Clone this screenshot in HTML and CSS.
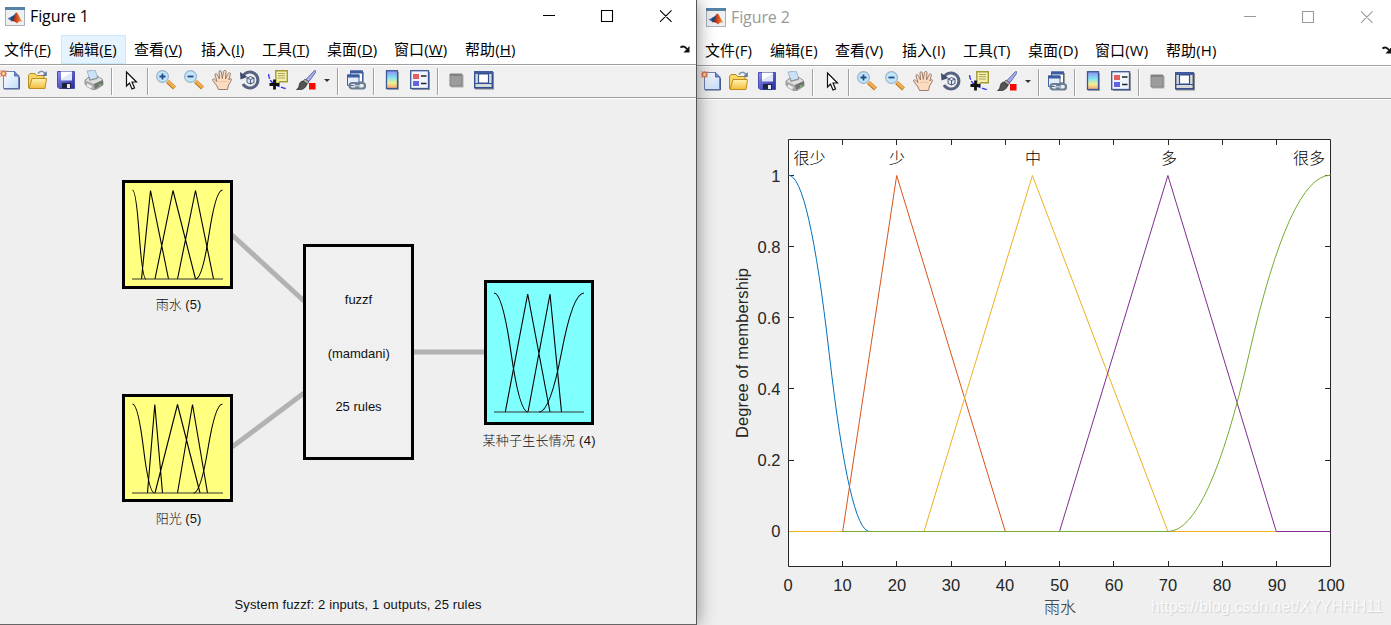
FILE: index.html
```html
<!DOCTYPE html>
<html lang="zh-CN">
<head>
    <meta charset="UTF-8">
    <meta name="viewport" content="width=device-width, initial-scale=1.0">
    <title>Figure 1</title>
    <link rel="stylesheet" href="styles.css">
</head>
<body>
    <!-- shared icons -->
    <svg class="sprite" width="0" height="0">
        <defs>
            <linearGradient id="gPage" x1="0" y1="0" x2="1" y2="1"><stop offset="0" stop-color="#fff"/><stop offset="1" stop-color="#c3dcfa"/></linearGradient>
            <linearGradient id="gFolder" x1="0" y1="0" x2="0" y2="1"><stop offset="0" stop-color="#fff5b0"/><stop offset="1" stop-color="#f0bd3c"/></linearGradient>
            <linearGradient id="gDisk" x1="0" y1="0" x2="1" y2="1"><stop offset="0" stop-color="#8f93ec"/><stop offset="1" stop-color="#23279b"/></linearGradient>
            <linearGradient id="gBar" x1="0" y1="0" x2="0" y2="1"><stop offset="0" stop-color="#8c8cf0"/><stop offset=".4" stop-color="#85e6f0"/><stop offset=".7" stop-color="#f3ee90"/><stop offset="1" stop-color="#f5a070"/></linearGradient>
            <linearGradient id="gLogo" x1="0" y1="0" x2="1" y2="0"><stop offset="0" stop-color="#5a1210"/><stop offset=".4" stop-color="#d0401a"/><stop offset="1" stop-color="#f2a13a"/></linearGradient>
        </defs>
        <symbol id="logo" viewBox="0 0 20 19">
            <rect x=".5" y=".5" width="19" height="18" fill="#eef0f2" stroke="#a9b2ba"/>
            <path d="M0 0h20v3H0z" fill="#5583a8"/>
            <path d="M2.500 11.500l4-2 2 2-2 2.500z" fill="#3f78b5"/>
            <path d="M6 10l3-2 2-2.500-1 6-3.500 3-1-2z" fill="#224a80"/>
            <path d="M6.500 14c3-1 3-7.500 5-8.500 2 1 3 5.500 6 9.500-2-1.500-3.500-1-5.500 1.500-1-1.500-3-2.500-5.500-2.500z" fill="url(#gLogo)"/>
        </symbol>
        <symbol id="new" viewBox="0 0 20 20">
            <path d="M3.500 1.500h11l4 4v13h-15z" fill="url(#gPage)" stroke="#7183b4"/>
            <path d="M14.500 1v5h5" fill="#6f86c2" stroke="#566da9"/>
            <path d="M4 19h15.500V7" fill="none" stroke="#465a91"/>
            <path d="M0 0l2 1 1.500-1L5 1l2-1-1 2 1 2-1 1 1 2-2-1-1.500 1L2 6 0 7l1-2-1-1.500L1 2z" fill="#d97a5c"/>
            <circle cx="3.500" cy="3.500" r="1.500" fill="#ffd98c"/>
        </symbol>
        <symbol id="open" viewBox="0 0 20 20">
            <path d="M.5 17.500v-12l1.500-2h5l1.500 2H16v3H5l-3 9z" fill="#f6d56a" stroke="#b58a1e"/>
            <path d="M1 18.500L4 8.500h14.500l-1.500 10z" fill="url(#gFolder)" stroke="#c08d1c"/>
            <path d="M10 3.500c2-3 5-3 7 0" fill="none" stroke="#7e93ad" stroke-width="1.600"/>
            <path d="M18.800 1v5h-5z" fill="#647d9d"/>
        </symbol>
        <symbol id="save" viewBox="0 0 20 20">
            <path d="M1.500 1.500h17v17H3l-1.500-1.500z" fill="url(#gDisk)" stroke="#4a4fb0"/>
            <path d="M5 1.500h11v9H5z" fill="#dfe8fa"/>
            <path d="M5 2h11l-11 7z" fill="#fff"/>
            <path d="M6 13h9v5.500H6z" fill="#20233f"/>
            <path d="M11 14h3v4h-3z" fill="#e9ebf3"/>
        </symbol>
        <symbol id="print" viewBox="0 0 20 20">
            <path d="M3 1l8-1 3 8-8 2z" fill="#cbe1f7" stroke="#94a9c2" stroke-width=".8"/>
            <path d="M1 10l4-3 1 3 8-2-1-2 5 3 1 3v3l-8 5H9l-8-6z" fill="#aaa" stroke="#858585" stroke-width=".8"/>
            <path d="M1.500 10.500L10 14l8.500-4-4-3-1 2-8 2-1-3z" fill="#dedede"/>
            <path d="M10 14l9-4v4l-8 5z" fill="#747474"/>
            <path d="M3 13l6 3-2 3-5-3z" fill="#eee" stroke="#999" stroke-width=".6"/>
            <path d="M15 15h2" stroke="#62d352" stroke-width="1.300"/>
        </symbol>
        <symbol id="pointer" viewBox="0 0 20 20">
            <path d="M6.500 2v14l3-3 2.500 6 2.500-1-2.500-6h4.500z" fill="#fff" stroke="#111" stroke-width="1.200"/>
        </symbol>
        <symbol id="lens" viewBox="0 0 20 20">
            <path d="M11.500 11.500l7 6.500" stroke="#b9772a" stroke-width="4.200"/>
            <path d="M11.500 11l7 6.500" stroke="#f3ae49" stroke-width="2.600"/>
            <circle cx="6.500" cy="6.500" r="5.900" fill="#c0e6f8" stroke="#9ab3cb" stroke-width="1.200"/>
        </symbol>
        <symbol id="zoomin" viewBox="0 0 20 20">
            <use href="#lens"/>
            <path d="M3.500 6.500h6M6.500 3.500v6" stroke="#264a8e" stroke-width="1.800"/>
        </symbol>
        <symbol id="zoomout" viewBox="0 0 20 20">
            <use href="#lens"/>
            <path d="M3.500 6.500h6" stroke="#264a8e" stroke-width="1.800"/>
        </symbol>
        <symbol id="pan" viewBox="0 0 20 20">
            <path d="M6.500 19.500L5 16 .8 10.500c-.8-1.500.8-2.300 2-1L5 11.500 3 5c-.2-1.700 1.600-2 2.200-.5L7.500 9 7 2c0-1.800 2-1.800 2.300 0l1 6.500 1.200-7C12 0 14 0 14 1.700l-.5 7.300 2.700-5.500c.8-1.500 2.600-.6 2.100 1L16.800 10l1-1c1.300-1 2.200.2 1.500 1.300L16.500 15l-1 4.500z" fill="#fbdcc0" stroke="#8e7263" stroke-width=".9"/>
            <path d="M7 12c3-1 6-1 8 0" fill="none" stroke="#e7b894" stroke-width=".8"/>
        </symbol>
        <symbol id="rotate" viewBox="0 0 20 20">
            <path d="M3 6A8 8 0 1 1 3 14" fill="none" stroke="#56627f" stroke-width="3"/>
            <path d="M0 2l.5 7.500 7-2.500z" fill="#3f4c6d"/>
            <path d="M7 8l3.500-1.500L14 8v4.500L10.500 14 7 12.500zM7 8l3.500 1.500L14 8M10.500 9.500V14" fill="#dbe6f2" stroke="#4e5b7a" stroke-width="1"/>
        </symbol>
        <symbol id="datatip" viewBox="0 0 20 20">
            <path d="M.5 4c1 7 3 11 18.500 15" fill="none" stroke="#3434f0" stroke-width="1.400" stroke-dasharray="5 1.500"/>
            <path d="M7.700.7h11.600v11H12l-4 3.500v-3.500z" fill="#f3efad" stroke="#a39b35" stroke-width="1.400"/>
            <path d="M10 3.500h7M10 5.700h7M10 8h7" stroke="#aaa45c"/>
            <path d="M1.500 14.500h10M6.500 9.500v10" stroke="#111" stroke-width="2.800"/>
        </symbol>
        <symbol id="brush" viewBox="0 0 20 20">
            <path d="M10 9.500L18 1c1-1 2.500-.5 1.500 1.500l-6.500 9z" fill="#a7b0ed" stroke="#6469ab"/>
            <path d="M9 9l4 3-2 2.500-4-3z" fill="#aaa" stroke="#555" stroke-width=".8"/>
            <path d="M7 11c-3 0-3.500 3-4 5-.3 1.700-1 2.700-2.500 3.500 4 .5 8 0 9.500-3.500l1-2z" fill="#545454" stroke="#222" stroke-width=".7"/>
            <path d="M13 13h6.500v6.500H13z" fill="#fb0505"/>
        </symbol>
        <symbol id="link" viewBox="0 0 20 20">
            <path d="M4.500 1h12v11h-12z" fill="#fff" stroke="#43619e"/>
            <path d="M4 .5h13v3H4z" fill="#3d5ca0"/>
            <path d="M17.500 2v10.500" stroke="#999"/>
            <path d="M1.500 5h11.500v10.500H1.500z" fill="#e4edf9" stroke="#43619e"/>
            <path d="M1 4.500h12.500v3H1z" fill="#3d5ca0"/>
            <rect x="3.500" y="13" width="9" height="5.500" rx="2.700" fill="none" stroke="#6c7d91" stroke-width="2.200"/>
            <rect x="10" y="13" width="9" height="5.500" rx="2.700" fill="none" stroke="#6c7d91" stroke-width="2.200"/>
            <path d="M7.500 15.800h7" stroke="#b9cadd" stroke-width="1.500"/>
        </symbol>
        <symbol id="colorbar" viewBox="0 0 20 20">
            <path d="M5 2h12v18H5z" fill="#a9a9a9"/>
            <rect x="4.500" y=".7" width="11" height="17.800" fill="url(#gBar)" stroke="#3c5796" stroke-width="1.300"/>
        </symbol>
        <symbol id="legend" viewBox="0 0 20 20">
            <path d="M2 2h18v18H2z" fill="#999"/>
            <rect x=".7" y=".7" width="17.800" height="17.800" fill="#f0f4fc" stroke="#3c5796" stroke-width="1.300"/>
            <path d="M3 4h6v5H3z" fill="#e75e5e"/>
            <path d="M3 11h6v5H3z" fill="#6464e2"/>
            <path d="M11 6h5.500M11 13.500h5.500" stroke="#222" stroke-width="1.500"/>
        </symbol>
        <symbol id="hide" viewBox="0 0 20 20">
            <path d="M5 5h12.500v12.500H5z" fill="#aeaeae"/>
            <path d="M4 4h12v12H4z" fill="#9c9c9c" stroke="#858585"/>
            <path d="M4 4h12v2H4z" fill="#818181"/>
        </symbol>
        <symbol id="dock" viewBox="0 0 20 20">
            <path d="M1 2h19v17.500H1z" fill="#888"/>
            <path d="M.7 1.700h17.600v16H.7z" fill="#d5dbd6" stroke="#334f91" stroke-width="1.400"/>
            <path d="M0 1h19v3H0z" fill="#3f5b9e"/>
            <path d="M4.500 4h10v9h-10z" fill="#fff" stroke="#334f91" stroke-width="1.200"/>
            <path d="M1 13.500h17" stroke="#334f91"/>
        </symbol>
        <symbol id="undock" viewBox="0 0 11 10">
            <path d="M.5 3.500C3 1.500 5 2.500 7 5" fill="none" stroke="#111" stroke-width="1.900"/>
            <path d="M9.500 2v6.500H3.500z" fill="#111"/>
        </symbol>
        <symbol id="controls" viewBox="0 0 130 14">
            <path d="M0 6.500h12M58.500 1.500h11v11h-11zM117 1.300l11.500 11.500M128.500 1.300l-11.500 11.500" fill="none" stroke="currentColor" stroke-width="1.100"/>
        </symbol>
    </svg>

    <div class="desktop">
        <section class="window active">
            <header class="titlebar">
                <svg class="logo"><use href="#logo"/></svg>
                <h1>Figure 1</h1>
                <svg class="controls"><use href="#controls"/></svg>
            </header>
            <nav class="menubar">
                <a>文件(<u>F</u>)</a>
                <a class="hover">编辑(<u>E</u>)</a>
                <a>查看(<u>V</u>)</a>
                <a>插入(<u>I</u>)</a>
                <a>工具(<u>T</u>)</a>
                <a>桌面(<u>D</u>)</a>
                <a>窗口(<u>W</u>)</a>
                <a>帮助(<u>H</u>)</a>
                <svg class="undock"><use href="#undock"/></svg>
            </nav>
            <div class="toolbar">
                <svg><use href="#new"/></svg>
                <svg><use href="#open"/></svg>
                <svg><use href="#save"/></svg>
                <svg><use href="#print"/></svg>
                <i class="sep"></i>
                <svg><use href="#pointer"/></svg>
                <i class="sep"></i>
                <svg><use href="#zoomin"/></svg>
                <svg><use href="#zoomout"/></svg>
                <svg><use href="#pan"/></svg>
                <svg><use href="#rotate"/></svg>
                <svg><use href="#datatip"/></svg>
                <svg><use href="#brush"/></svg>
                <i class="caret"></i>
                <i class="sep"></i>
                <svg><use href="#link"/></svg>
                <i class="sep"></i>
                <svg><use href="#colorbar"/></svg>
                <svg><use href="#legend"/></svg>
                <i class="sep"></i>
                <svg><use href="#hide"/></svg>
                <svg><use href="#dock"/></svg>
            </div>
            <svg class="canvas system" width="696" height="525" viewBox="0 99 696 525">
                <path class="wire" d="M232 235L304 301M232 447L304 393M413 352H485"/>

                <rect class="box input" x="123.500" y="181.500" width="108" height="106"/>
                <g class="mf">
                    <path d="M132.500 190Q136 190 139.200 234.500T146 279"/>
                    <path d="M141.500 279L150.500 190.500L168.500 279M155 279L173 190.500L195.500 279M177.500 279L195.500 190.500L213.500 279"/>
                    <path d="M195.500 279Q202.200 279 209 234.500T222.500 190"/>
                    <path class="base" d="M132 279H223"/>
                </g>
                <text x="178.500" y="309">雨水 (5)</text>

                <rect class="box input" x="123.500" y="395.500" width="108" height="105"/>
                <g class="mf">
                    <path d="M132.500 404Q138 404 143.500 448.500T154.500 493"/>
                    <path d="M147.500 493L154.800 404.500L162.500 493M155 493L177.500 404.500L200 493M177.500 493L192.500 404.500L207.500 493"/>
                    <path d="M193.500 493Q200.700 493 208 448.500T222.500 404"/>
                    <path class="base" d="M132 493H223"/>
                </g>
                <text x="178.500" y="523">阳光 (5)</text>

                <rect class="box" x="304.500" y="245.500" width="108" height="213"/>
                <text x="358.500" y="304">fuzzf</text>
                <text x="358.700" y="358">(mamdani)</text>
                <text x="358.500" y="411">25 rules</text>

                <rect class="box output" x="485.500" y="281.500" width="107" height="142"/>
                <g class="mf">
                    <path d="M494 293Q502.500 293 511 352.500T528 412"/>
                    <path d="M505.300 412L527.700 294L550 412M528 412L550 294L561.500 412"/>
                    <path d="M539 412Q550.200 412 561.500 352.500T584 293"/>
                    <path class="base" d="M494 412H584"/>
                </g>
                <text x="539" y="445" textLength="113">某种子生长情况 (4)</text>

                <text x="358" y="609" textLength="247">System fuzzf: 2 inputs, 1 outputs, 25 rules</text>
            </svg>
        </section>

        <section class="window inactive">
            <header class="titlebar">
                <svg class="logo"><use href="#logo"/></svg>
                <h1>Figure 2</h1>
                <svg class="controls"><use href="#controls"/></svg>
            </header>
            <nav class="menubar">
                <a>文件(F)</a>
                <a>编辑(E)</a>
                <a>查看(V)</a>
                <a>插入(I)</a>
                <a>工具(T)</a>
                <a>桌面(D)</a>
                <a>窗口(W)</a>
                <a>帮助(H)</a>
                <svg class="undock"><use href="#undock"/></svg>
            </nav>
            <div class="toolbar">
                <svg><use href="#new"/></svg>
                <svg><use href="#open"/></svg>
                <svg><use href="#save"/></svg>
                <svg><use href="#print"/></svg>
                <i class="sep"></i>
                <svg><use href="#pointer"/></svg>
                <i class="sep"></i>
                <svg><use href="#zoomin"/></svg>
                <svg><use href="#zoomout"/></svg>
                <svg><use href="#pan"/></svg>
                <svg><use href="#rotate"/></svg>
                <svg><use href="#datatip"/></svg>
                <svg><use href="#brush"/></svg>
                <i class="caret"></i>
                <i class="sep"></i>
                <svg><use href="#link"/></svg>
                <i class="sep"></i>
                <svg><use href="#colorbar"/></svg>
                <svg><use href="#legend"/></svg>
                <i class="sep"></i>
                <svg><use href="#hide"/></svg>
                <svg><use href="#dock"/></svg>
            </div>
            <svg class="canvas plot" width="694" height="525" viewBox="697 100 694 525">
                <rect x="788" y="139" width="543" height="428" fill="#fff"/>
                <path class="axis" d="M788.500 139.500H1330.500V566.500H788.500z"/>
                <path class="axis" d="M842.500 566v-5M896.500 566v-5M951.500 566v-5M1005.500 566v-5M1059.500 566v-5M1113.500 566v-5M1168.500 566v-5M1222.500 566v-5M1276.500 566v-5
                    M842.500 140v5M896.500 140v5M951.500 140v5M1005.500 140v5M1059.500 140v5M1113.500 140v5M1168.500 140v5M1222.500 140v5M1276.500 140v5"/>
                <path class="axis" d="M789 175.500h5M789 246.500h5M789 317.500h5M789 388.500h5M789 460.500h5M789 531.500h5
                    M1330 175.500h-5M1330 246.500h-5M1330 317.500h-5M1330 388.500h-5M1330 460.500h-5M1330 531.500h-5"/>

                <path class="line c1" d="M788.500 175.200Q808.800 175.200 829.200 353.500T869.800 531.500"/>
                <path class="line c2" d="M842.700 531.500L896.700 175.500L1005.300 531.500"/>
                <path class="line c3" d="M924 531.500L1032.400 175.500L1167.900 531.500H1276"/>
                <path class="line c4" d="M1059.500 531.500L1167.900 175.500L1276.300 531.500H1330.500"/>
                <path class="line c5" d="M789 531.500H1167.900Q1208.600 531.500 1249.200 353.500T1330.500 175.200"/>
                <path class="line c3" d="M789 531.500H842"/>

                <g class="names">
                    <text x="809.500" y="164">很少</text>
                    <text x="897" y="164">少</text>
                    <text x="1033" y="164">中</text>
                    <text x="1169" y="164">多</text>
                    <text x="1309" y="164">很多</text>
                </g>
                <g class="xticks">
                    <text x="788" y="591">0</text>
                    <text x="842.500" y="591">10</text>
                    <text x="897" y="591">20</text>
                    <text x="951" y="591">30</text>
                    <text x="1005" y="591">40</text>
                    <text x="1059.500" y="591">50</text>
                    <text x="1114" y="591">60</text>
                    <text x="1168" y="591">70</text>
                    <text x="1222" y="591">80</text>
                    <text x="1277" y="591">90</text>
                    <text x="1331" y="591">100</text>
                </g>
                <g class="yticks">
                    <text x="780.500" y="182">1</text>
                    <text x="780.500" y="253">0.8</text>
                    <text x="780.500" y="324">0.6</text>
                    <text x="780.500" y="395">0.4</text>
                    <text x="780.500" y="466">0.2</text>
                    <text x="780.500" y="537">0</text>
                </g>
                <text x="1060" y="613">雨水</text>
                <text class="ylabel" transform="translate(748 353) rotate(-90)" textLength="170">Degree of membership</text>
                <text class="watermark" x="1151" y="612" textLength="232">https://blog.csdn.net/XYYHHH11</text>
            </svg>
        </section>
    </div>
</body>
</html>
```
FILE: styles.css
```css
* {
    margin: 0;
    padding: 0;
    box-sizing: border-box;
}

body {
    background: #efefef;
    overflow: hidden;
}

.sprite {
    display: block;
}

.desktop {
    display: flex;
    width: 1391px;
    height: 625px;
    overflow: hidden;
}

.window {
    background: #efefef;
    height: 625px;
    overflow: hidden;
}

.active {
    position: relative;
    z-index: 1;
    width: 697px;
    border-right: 1px solid #555;
    border-bottom: 1px solid #666;
    box-shadow: 0 0 18px rgba(0, 0, 0, 0.45);
}

.inactive {
    width: 694px;
}

.titlebar {
    display: flex;
    align-items: flex-start;
    height: 35px;
    padding: 7px 23px 0 5px;
    background: #fff;
    color: #000;
}

.inactive .titlebar {
    height: 36px;
    padding: 8px 17px 0 9px;
    color: #999;
}

.logo {
    width: 20px;
    height: 19px;
    margin-right: 5px;
}

h1 {
    font: 16px/18px "Open Sans", "Noto Sans", sans-serif;
    letter-spacing: -0.1px;
}

.controls {
    width: 130px;
    height: 14px;
    margin: 2px 0 0 auto;
}

/* menu */
.menubar {
    display: grid;
    grid-template-columns: 65px 65px 67px 61px 65px 67px 71px 70px 1fr;
    height: 29px;
    padding-right: 5px;
    margin-left: -4px;
    background: #fff;
    color: #000;
}

.inactive .menubar {
    margin-left: 0;
    padding-right: 0;
    margin-right: -2px;
}

.menubar a {
    padding-left: 7px;
    font: 15px/27px "Open Sans", "Noto Sans CJK SC", sans-serif;
    letter-spacing: 0.1px;
    white-space: nowrap;
    border: 1px solid transparent;
}

.menubar a.hover {
    background: #e5f3ff;
    border-color: #cce8ff;
}

.undock {
    width: 11px;
    height: 10px;
    margin: 9px 0 0 auto;
}

/* toolbar */
.toolbar {
    display: flex;
    align-items: center;
    gap: 8px;
    height: 35px;
    background: #f0f0f0;
    border-top: 1px solid #a0a0a0;
    border-bottom: 1px solid #fff;
    box-shadow: inset 0 1px #fff, inset 0 -1px #a0a0a0;
    padding-bottom: 3px;
}

.inactive .toolbar {
    padding-left: 4px;
}

.toolbar svg {
    flex: none;
    width: 20px;
    height: 20px;
}

.sep {
    flex: none;
    width: 2px;
    height: 27px;
    margin: 3px -1px 0;
    background: #a0a0a0;
    border-right: 1px solid #fff;
}

.caret {
    flex: none;
    width: 6px;
    margin: 0 -1px 0 1px;
    transform: translateX(-1px);
    border: solid transparent;
    border-width: 3px 3px 0;
    border-top-color: #333;
}

/* figure contents */
.canvas {
    display: block;
    font-family: "Liberation Sans", "Noto Sans CJK SC", sans-serif;
    text-anchor: middle;
}

.system {
    font-size: 13px;
    fill: #111;
}

.wire {
    fill: none;
    stroke: #b2b2b2;
    stroke-width: 5;
}

.box {
    fill: #f0f0f0;
    stroke: #000;
    stroke-width: 3;
}

.input {
    fill: #ffff80;
}

.output {
    fill: #80ffff;
}

.mf {
    fill: none;
    stroke: #000;
    stroke-width: 1.1;
}

.mf .base {
    stroke: #333;
}

.plot {
    font-size: 16px;
    fill: #262626;
}

.names {
    fill: #000;
}

.canvas text {
    font-weight: 300;
}

.axis {
    fill: none;
    stroke: #262626;
}

.line {
    fill: none;
    stroke-width: 1;
}

.c1 { stroke: #0072bd; }
.c2 { stroke: #d95319; }
.c3 { stroke: #edb120; }
.c4 { stroke: #7e2f8e; }
.c5 { stroke: #77ac30; }

.xticks,
.yticks,
.ylabel {
    font-size: 16.5px;
}

.yticks {
    text-anchor: end;
}

.watermark {
    text-anchor: start;
    fill: #fafafa;
    text-shadow: 1px 1px 1px #d0d0d0;
}
```
